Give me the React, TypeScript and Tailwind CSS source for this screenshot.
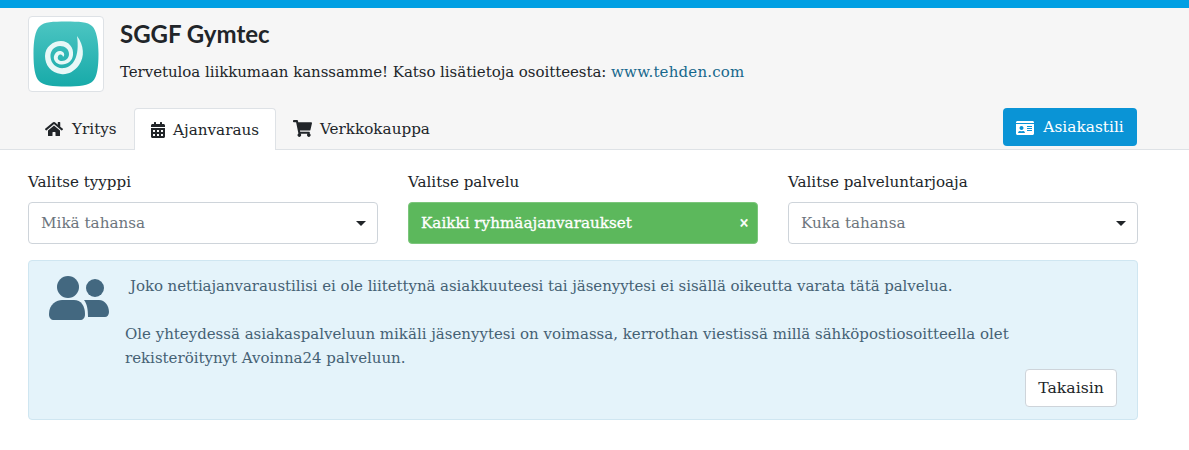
import React from "react";
import { FaHome, FaCalendarAlt, FaShoppingCart, FaIdCard } from "react-icons/fa";

const serif = { fontFamily: "'DejaVu Serif', serif" };

const Logo: React.FC = () => (
  <svg width="66" height="66" viewBox="0 0 66 66">
    <defs>
      <linearGradient id="logoBg" x1="0" y1="0" x2="0" y2="1">
        <stop offset="0" stopColor="#4cc5c2" />
        <stop offset="1" stopColor="#17aaa9" />
      </linearGradient>
    </defs>
    <path
      d="M33 0.5 C46 0.5 55 1 59 5 C63.5 9 65.5 20 65.5 33 C65.5 46 64 56 60 60 C56 64.5 46 65.5 33 65.5 C20 65.5 10 64.5 6 60 C2 56 0.5 46 0.5 33 C0.5 20 2 9 7 5 C11 1 20 0.5 33 0.5 Z"
      fill="url(#logoBg)"
    />
    <path
      d="M44 15 C51 24 52 36 46 44 C41 51 34 54 28 53 C18 52 12 44 12 35 C12 26 20 20 28 20 C36 20 41 27 40 34 C39.5 40 34 44 28 43.5 C23 43 20 39 21 35 C22 31 26 29 29 30.5 C31.5 31.5 32 34.5 30 36 C30 33 26 32.5 25 35.5 C24 38 26 40 29 40 C33 40 36 37 36 33 C36 28 32 25 27 25 C21 25 17 30 17.5 36 C18 43 24 48 31 47 C40 46 47 36 44 15 Z"
      fill="#e8f8f7"
    />
  </svg>
);

const Field: React.FC<{ label: string; placeholder: string }> = ({ label, placeholder }) => (
  <div className="w-[350px]">
    <div className="text-[15.1px] leading-[24px] mb-[7px] -mt-px pb-px text-[#212529]">{label}</div>
    <div className="h-[42px] border border-[#ced4da] rounded-[4px] bg-white flex items-center justify-between pl-[12px] pr-[10px] text-[15.2px] text-[#6c757d]">
      <span>{placeholder}</span>
      <span className="w-0 h-0 border-x-[5px] border-x-transparent border-t-[5px] border-t-[#212529] mr-[1px]" />
    </div>
  </div>
);

export default function App() {
  return (
    <div className="w-[1189px] h-[450px] bg-white overflow-hidden text-[#212529]" style={serif}>
      <div className="h-[8px] bg-[#009fe3]" />

      {/* Header */}
      <div className="h-[142px] bg-[#f6f6f6] border-b border-[#dee2e6] pl-[28px] pr-[52px] flex flex-col">
        <div className="flex mt-[8px]">
          <div className="w-[76px] h-[76px] bg-white border border-[#dee2e6] rounded-[4px] flex items-center justify-center">
            <Logo />
          </div>
          <div className="ml-[16px]">
            <div className="text-[24px] leading-[36px] font-bold text-[#212529]" style={{ fontFamily: "Lato, sans-serif" }}>
              SGGF Gymtec
            </div>
            <div className="text-[15px] leading-[24px] mt-[8px] tracking-[-0.05px]">
              Tervetuloa liikkumaan kanssamme! Katso lisätietoja osoitteesta:{" "}
              <a className="text-[#17688c] tracking-[0.2px]">www.tehden.com</a>
            </div>
          </div>
        </div>

        <div className="flex justify-between mt-[16px]">
          <div className="flex">
            <div className="h-[41px] w-[106px] pl-[17px] pt-[1px] flex items-center gap-[9px] text-[15.2px]">
              <FaHome size={18} className="-mt-px" /> Yritys
            </div>
            <div className="h-[42px] w-[142px] pl-[16px] pt-[1px] flex items-center gap-[8px] text-[15.2px] bg-white border border-b-0 border-[#dee2e6] rounded-t-[4px]">
              <FaCalendarAlt className="w-[14px] h-[16px] -mt-px" /> Ajanvaraus
            </div>
            <div className="h-[41px] pl-[17px] pr-[17px] pt-[1px] flex items-center gap-[8px] text-[15.2px]">
              <FaShoppingCart size={19} className="-mt-px" /> Verkkokauppa
            </div>
          </div>
          <div className="w-[134px] h-[38px] pt-[1px] rounded-[4px] bg-[#0a94d6] text-white flex items-center justify-center gap-[9px] text-[15.4px]">
            <FaIdCard size={18} /> Asiakastili
          </div>
        </div>
      </div>

      {/* Filters */}
      <div className="pl-[28px] pr-[51px] pt-[21px] flex gap-[30px]">
        <Field label="Valitse tyyppi" placeholder="Mikä tahansa" />
        <div className="w-[350px]">
          <div className="text-[15.1px] leading-[24px] mb-[7px] -mt-px pb-px">Valitse palvelu</div>
          <div className="h-[42px] rounded-[4px] bg-[#5cb85c] border border-[#7cc67c] text-white flex items-center justify-between pl-[12px] pr-[8px] text-[15.2px] [-webkit-text-stroke:0.3px_white]">
            <span>Kaikki ryhmäajanvaraukset</span>
            <span className="text-[12px] font-bold">×</span>
          </div>
        </div>
        <Field label="Valitse palveluntarjoaja" placeholder="Kuka tahansa" />
      </div>

      {/* Alert */}
      <div className="mt-[16px] ml-[28px] w-[1110px] h-[160px] bg-[#e4f3fa] border border-[#cfe6f1] rounded-[4px] text-[#456174] flex pt-[13px] pl-[20px] pr-[20px]">
        <svg width="60" height="44" viewBox="0 0 60 44" className="mt-[2px] shrink-0" fill="#436880">
          <circle cx="19" cy="11" r="11" />
          <circle cx="46" cy="12" r="9" />
          <path d="M0 38 C0 28 8 24 13 24 H25 C32 24 36 30 36 38 C36 42 34 44 31 44 H5 C2 44 0 42 0 38 Z" />
          <path d="M35 24 H50 C56 24 60 30 60 36 C60 39 58 41 56 41 H39 C39 33 38 28 35 24 Z" />
        </svg>
        <div className="ml-[16px] flex-1 text-[15px] leading-[24px]">
          <div className="pl-[5px] tracking-[-0.07px]">
            Joko nettiajanvaraustilisi ei ole liitettynä asiakkuuteesi tai jäsenyytesi ei sisällä oikeutta varata tätä palvelua.
          </div>
          <div className="mt-[24px] w-[960px] tracking-[-0.01px]">
            Ole yhteydessä asiakaspalveluun mikäli jäsenyytesi on voimassa, kerrothan viestissä millä sähköpostiosoitteella olet rekisteröitynyt Avoinna24 palveluun.
          </div>
          <div className="flex justify-end -mt-px">
            <div className="w-[92px] h-[38px] bg-white border border-[#ced4da] rounded-[4px] flex items-center justify-center text-[15.7px] text-[#212529]">
              Takaisin
            </div>
          </div>
        </div>
      </div>
    </div>
  );
}
